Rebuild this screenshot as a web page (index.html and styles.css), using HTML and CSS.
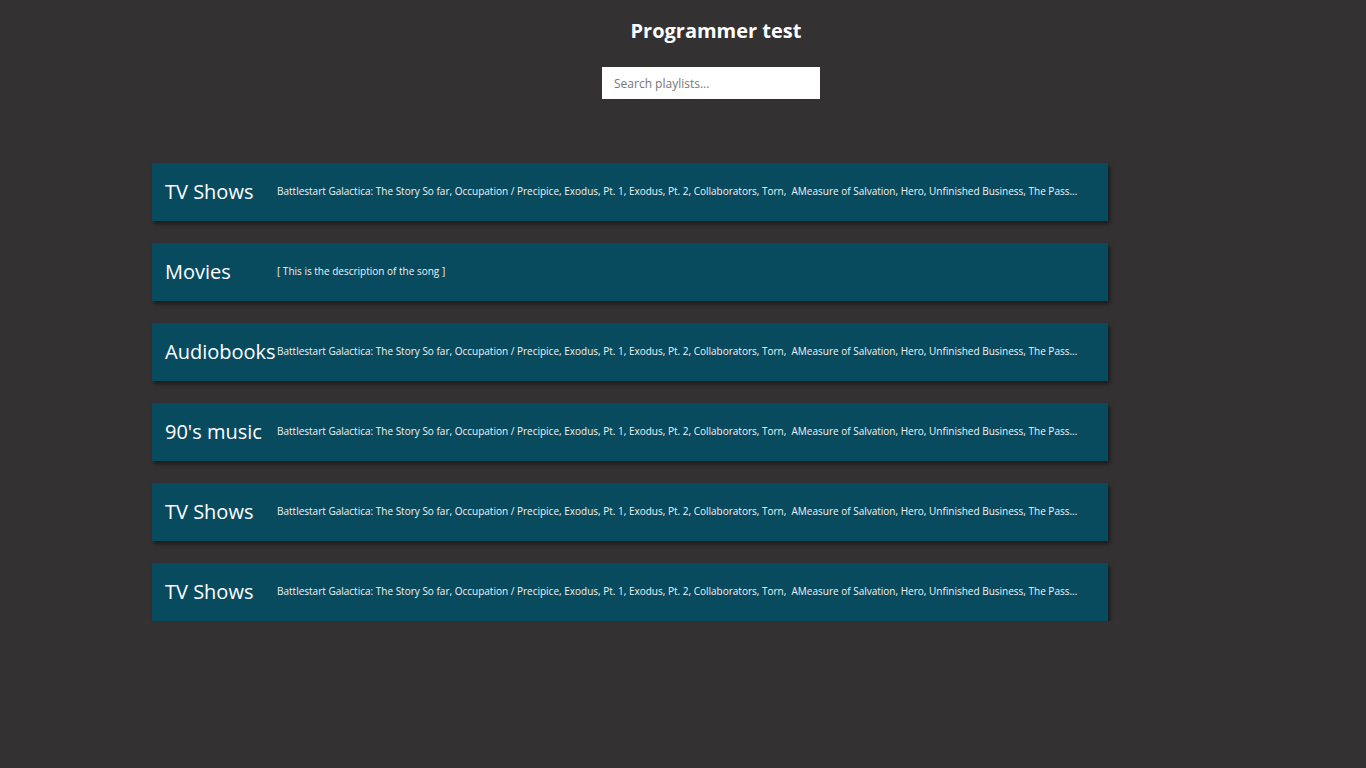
FILE: index.html
```html
<!DOCTYPE html>
<html>
<head>
<meta charset="utf-8">
<link rel="stylesheet" href="styles.css">
</head>
<body>
<header class="header">
  <h1 class="title">Programmer test</h1>
  <input class="search" type="text" placeholder="Search playlists...">
</header>
<main class="list">
  <div class="card"><div class="card-title">TV Shows</div><div class="card-desc">Battlestart Galactica: The Story So far, Occupation / Precipice, Exodus, Pt. 1, Exodus, Pt. 2, Collaborators, Torn, &nbsp;AMeasure of Salvation, Hero, Unfinished Business, The Passage, The Eye of Jupiter, Rapture</div></div>
  <div class="card"><div class="card-title">Movies</div><div class="card-desc">[ This is the description of the song ]</div></div>
  <div class="card"><div class="card-title">Audiobooks</div><div class="card-desc">Battlestart Galactica: The Story So far, Occupation / Precipice, Exodus, Pt. 1, Exodus, Pt. 2, Collaborators, Torn, &nbsp;AMeasure of Salvation, Hero, Unfinished Business, The Passage, The Eye of Jupiter, Rapture</div></div>
  <div class="card"><div class="card-title">90's music</div><div class="card-desc">Battlestart Galactica: The Story So far, Occupation / Precipice, Exodus, Pt. 1, Exodus, Pt. 2, Collaborators, Torn, &nbsp;AMeasure of Salvation, Hero, Unfinished Business, The Passage, The Eye of Jupiter, Rapture</div></div>
  <div class="card"><div class="card-title">TV Shows</div><div class="card-desc">Battlestart Galactica: The Story So far, Occupation / Precipice, Exodus, Pt. 1, Exodus, Pt. 2, Collaborators, Torn, &nbsp;AMeasure of Salvation, Hero, Unfinished Business, The Passage, The Eye of Jupiter, Rapture</div></div>
  <div class="card"><div class="card-title">TV Shows</div><div class="card-desc">Battlestart Galactica: The Story So far, Occupation / Precipice, Exodus, Pt. 1, Exodus, Pt. 2, Collaborators, Torn, &nbsp;AMeasure of Salvation, Hero, Unfinished Business, The Passage, The Eye of Jupiter, Rapture</div></div>
</main>
</body>
</html>
```
FILE: styles.css
```css
html, body {
  margin: 0;
  padding: 0;
  background: #333132;
  font-family: "Open Sans", "Noto Sans", sans-serif;
  color: #fff;
}
.header {
  display: flex;
  flex-direction: column;
  align-items: center;
  padding-top: 17px;
}
.title {
  margin: 0 0 0 66px;
  font-size: 20px;
  font-weight: 700;
  line-height: 28px;
}
.search {
  margin-top: 22px;
  margin-left: 56px;
  width: 218px;
  height: 32px;
  box-sizing: border-box;
  border: none;
  outline: none;
  padding: 0 12px;
  font-family: "Open Sans", sans-serif;
  font-size: 12px;
  color: #333;
  background: #fff;
}
.search::placeholder {
  color: #777;
}
.list {
  display: flex;
  flex-direction: column;
  gap: 22px;
  padding: 64px 0 0 152px;
}
.card {
  width: 956px;
  height: 58px;
  box-sizing: border-box;
  background: #084b5f;
  display: flex;
  align-items: center;
  padding: 0 30px 2px 13px;
  box-shadow: 2px 3px 4px rgba(0, 0, 0, 0.45);
}
.card-title {
  flex: 0 0 112px;
  font-size: 20px;
  white-space: nowrap;
  color: #fff;
}
.card-desc {
  flex: 1;
  min-width: 0;
  font-size: 10px;
  color: #f2f2f2;
  white-space: nowrap;
  overflow: hidden;
  text-overflow: ellipsis;
}
```
